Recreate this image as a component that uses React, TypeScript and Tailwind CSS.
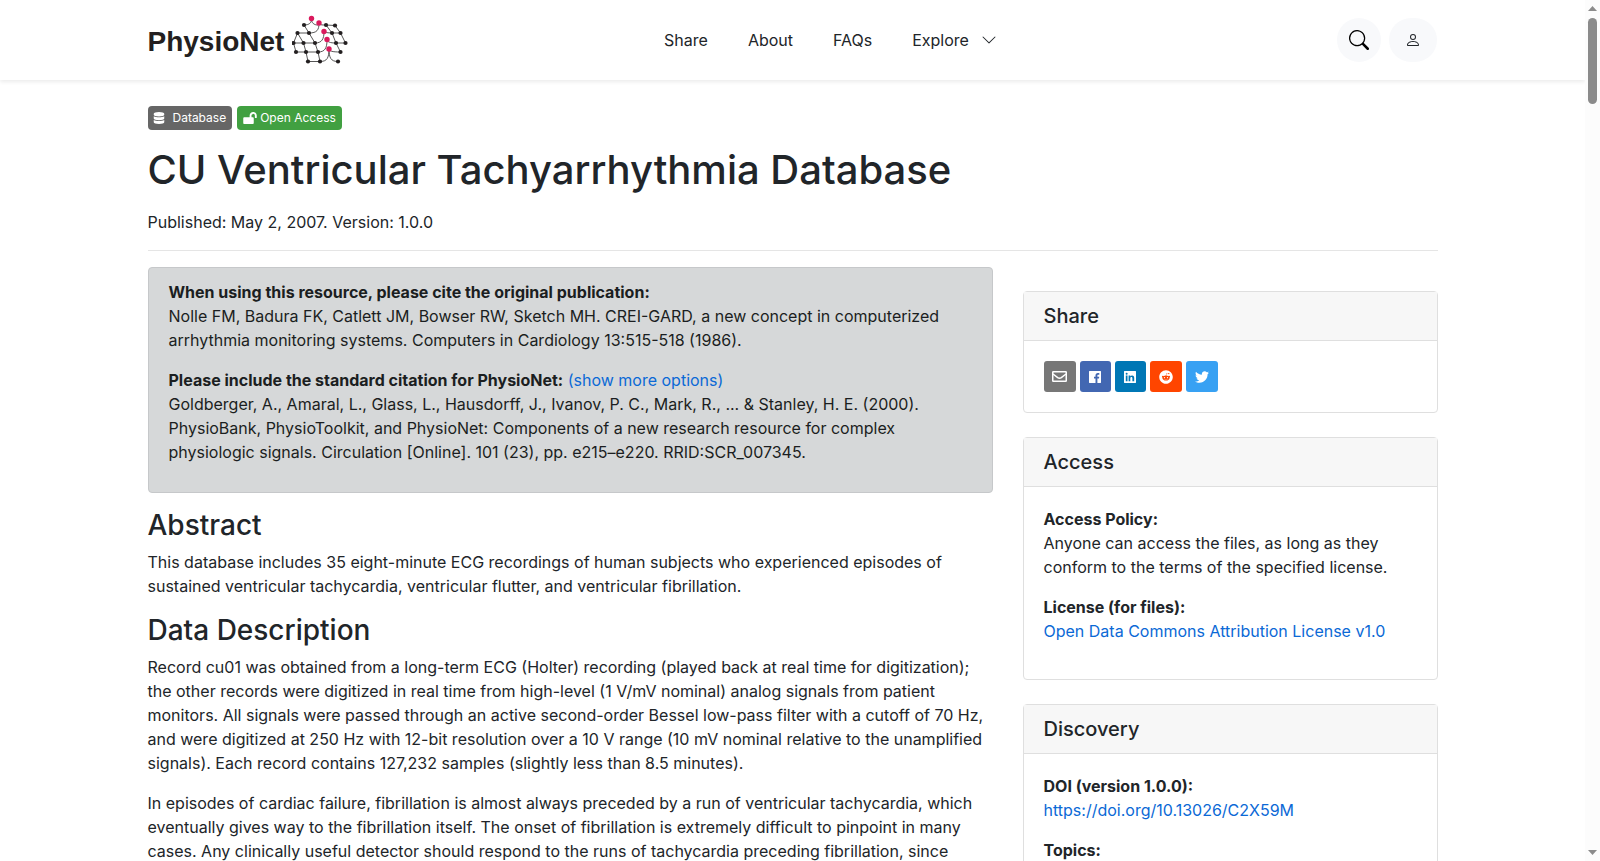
import React from 'react';
import { BsChevronDown, BsPerson, BsSearch } from 'react-icons/bs';
import { FaDatabase, FaLockOpen, FaReddit, FaTwitter } from 'react-icons/fa';

function EnvelopeIcon() {
  return (
    <svg width="15" height="11" viewBox="0 0 15 11" fill="none" stroke="currentColor" strokeWidth="1.5">
      <rect x="0.75" y="0.75" width="13.5" height="9.5" rx="0.5" />
      <path d="M1 3L5.7 6.6C6.8 7.4 8.2 7.4 9.3 6.6L14 3" />
    </svg>
  );
}

function FacebookIcon() {
  return (
    <svg width="12" height="12" viewBox="0 0 12 12" fill="currentColor">
      <path d="M0.4 0H11.6L12 0.4V11.6L11.6 12H8.4V7.5H10L10.2 5.7H8.4V4.6C8.4 4 8.6 3.7 9.3 3.7H10.3V2.1C9.9 2 9.4 2 8.9 2C7.4 2 6.5 2.9 6.5 4.4V5.7H5V7.5H6.5V12H0.4L0 11.6V0.4Z" />
    </svg>
  );
}

function LinkedinIcon() {
  return (
    <svg width="12" height="12" viewBox="0 0 12 12" fill="currentColor">
      <path
        fillRule="evenodd"
        d="M0.4 0H11.6L12 0.4V11.6L11.6 12H0.4L0 11.6V0.4ZM1.8 4.6V10.2H3.5V4.6ZM2.65 1.7A1 1 0 1 0 2.65 3.7A1 1 0 1 0 2.65 1.7ZM4.6 4.6V10.2H6.3V7.3C6.3 6.5 6.6 5.9 7.4 5.9C8.2 5.9 8.4 6.5 8.4 7.3V10.2H10.2V7C10.2 5.4 9.7 4.4 8.1 4.4C7.2 4.4 6.6 4.8 6.3 5.4V4.6Z"
      />
    </svg>
  );
}

const navLinks = ['Share', 'About', 'FAQs'];

const shareLinks = [
  { label: 'Email', icon: <EnvelopeIcon />, className: 'w-8 bg-[#777777]' },
  { label: 'Facebook', icon: <FacebookIcon />, className: 'w-[31px] bg-[#4267b2]' },
  { label: 'LinkedIn', icon: <LinkedinIcon />, className: 'w-[31px] bg-[#0077b5]' },
  { label: 'Reddit', icon: <FaReddit className="h-[14px] w-[14px]" />, className: 'w-8 bg-[#ff4500]' },
  { label: 'Twitter', icon: <FaTwitter className="h-[14px] w-[14px]" />, className: 'w-8 bg-[#38a1f3]' },
];

// Node positions in the 58x50 logo mesh
const darkNodes = [
  [12, 10], [34, 10], [43, 10.5],
  [5.5, 18], [17, 18], [40, 18], [48.5, 18],
  [1.5, 28], [11.5, 28], [23, 28], [44, 28], [53.5, 28],
  [4, 37], [14, 37], [26, 37], [48.5, 37],
  [16, 46.5], [28, 46.5], [46, 46.5],
];
const pinkNodes = [[19.5, 3.5], [27, 8], [32, 16.5], [35, 24.5], [37, 34]];

function Logo() {
  return (
    <a href="#" aria-label="PhysioNet home" className="flex w-50 items-center gap-2 text-[#231f20]">
      <span className="pt-1 font-['Liberation_Sans',Arial,sans-serif] text-[28px] leading-8 font-bold">PhysioNet</span>
      <svg width="58" height="50" viewBox="0 0 58 50" className="shrink-0">
        <g fill="none" stroke="#444" strokeWidth="0.9">
          <path d="M12 10C17 10 19.5 8 19.5 4C19.5 8 22 10 26 10M12 10L17 18L23 28L26 37L28 46.5" />
          <path d="M5.5 18H17C25 18 27 15 27 8M5.5 18L11.5 28L14 37L16 46.5H28" />
          <path d="M5.5 18L1.5 28H23C30 28 32 24 32 16.5M1.5 28L4 37H26C33 37 35 33 35 25" />
          <path d="M28 46.5C35 46.5 37 43 37 34C37 43 39 46.5 46 46.5" />
          <path d="M27 8C27 10 30 10 34 10L43 10.5L48.5 18L53.5 28H44C38 28 35 27 35 24" />
          <path d="M34 10L40 18L44 28L48.5 37C40 37 37 36 37 34M32 16C33 18 36 18 48.5 18" />
        </g>
        {darkNodes.map(([x, y]) => (
          <circle key={`${x}-${y}`} cx={x} cy={y} r="2.1" fill="#231f20" />
        ))}
        {pinkNodes.map(([x, y]) => (
          <circle key={`${x}-${y}`} cx={x} cy={y} r="2.7" fill="#da1a5d" />
        ))}
      </svg>
    </a>
  );
}

function Header() {
  return (
    <header className="h-20 shadow-[0_2px_4px_rgba(0,0,0,0.08)]">
      <div className="mx-auto flex h-full max-w-[1320px] items-center justify-between px-[15px]">
        <Logo />
        <nav className="flex items-center gap-10 pr-6">
          {navLinks.map((label) => (
            <a key={label} href="#">{label}</a>
          ))}
          <button type="button" className="flex items-center gap-3">
            Explore
            <BsChevronDown className="h-4 w-4" />
          </button>
        </nav>
        <div className="flex gap-2">
          <button type="button" aria-label="Search" className="flex h-11 w-11 items-center justify-center rounded-full bg-[#f8f9fb] text-black">
            <BsSearch className="h-5 w-5" />
          </button>
          <button type="button" aria-label="Account" className="flex h-11 w-12 items-center justify-center rounded-full bg-[#f8f9fb]">
            <BsPerson className="h-4 w-4" />
          </button>
        </div>
      </div>
    </header>
  );
}

function Card({ title, children }: { title: string; children: React.ReactNode }) {
  return (
    <section className="rounded border border-[#dfdfdf] bg-white">
      <h2 className="border-b border-[#dfdfdf] bg-[#f7f7f7] px-5 py-3 text-xl leading-6 font-medium">{title}</h2>
      <div className="p-5">{children}</div>
    </section>
  );
}

function SectionTitle({ children }: { children: React.ReactNode }) {
  return <h2 className="mb-2 text-[28px] leading-[33px] font-medium">{children}</h2>;
}

function Scrollbar() {
  return (
    <div aria-hidden="true" className="flex w-[15px] shrink-0 flex-col items-center bg-[#fcfcfc] py-1.5">
      <svg width="9" height="5" viewBox="0 0 9 5"><path d="M0 5L4.5 0L9 5Z" fill="#8b8b8b" /></svg>
      <div className="mt-[7px] h-[86px] w-[9px] rounded-full bg-[#8b8b8b]" />
      <svg width="9" height="5" viewBox="0 0 9 5" className="mt-auto"><path d="M0 0H9L4.5 5Z" fill="#8b8b8b" /></svg>
    </div>
  );
}

export default function App() {
  return (
    <div className="flex h-screen bg-white font-['Inter',sans-serif] text-base leading-6 text-[#212529]">
      <div className="min-w-0 flex-1 overflow-y-auto [scrollbar-width:none]">
        <Header />

        <main className="mx-auto max-w-[1320px] px-[15px] pt-[26px]">
          <div className="flex gap-[5px] text-xs text-white">
            <span className="flex h-6 items-center gap-2 rounded bg-[#666666] pr-1.5 pl-[5px]">
              <FaDatabase className="h-3 w-3" />
              Database
            </span>
            <span className="flex h-6 items-center gap-[3px] rounded bg-[#41a041] px-1.5">
              <FaLockOpen className="h-3 w-[14px]" />
              Open Access
            </span>
          </div>

          <h1 className="mt-4 text-[40px] leading-12 font-medium">CU Ventricular Tachyarrhythmia Database</h1>
          <p className="mt-4">Published: May 2, 2007. Version: 1.0.0</p>
          <hr className="my-4 border-[#e5e5e5]" />

          <div className="grid grid-cols-[minmax(0,845fr)_minmax(0,415fr)] gap-[30px]">
            <article>
              <div className="mb-4 rounded border border-[#c6c8ca] bg-[#d6d8d9] px-5 py-3 text-[#1b1e21]">
                <p className="mb-4">
                  <strong>When using this resource, please cite the original publication:</strong>
                  <br />
                  Nolle FM, Badura FK, Catlett JM, Bowser RW, Sketch MH. CREI-GARD, a new concept in computerized
                  arrhythmia monitoring systems. Computers in Cardiology 13:515-518 (1986).
                </p>
                <p className="mb-4">
                  <strong>Please include the standard citation for PhysioNet:</strong>{' '}
                  <a href="#" className="text-[#0b69d6]">(show more options)</a>
                  <br />
                  Goldberger, A., Amaral, L., Glass, L., Hausdorff, J., Ivanov, P. C., Mark, R., ... &amp; Stanley, H. E.
                  (2000). PhysioBank, PhysioToolkit, and PhysioNet: Components of a new research resource for complex
                  physiologic signals. Circulation [Online]. 101 (23), pp. e215–e220. RRID:SCR_007345.
                </p>
              </div>

              <SectionTitle>Abstract</SectionTitle>
              <p className="mb-4">
                This database includes 35 eight-minute ECG recordings of human subjects who experienced episodes of
                sustained ventricular tachycardia, ventricular flutter, and ventricular fibrillation.
              </p>

              <SectionTitle>Data Description</SectionTitle>
              <p className="mb-4">
                Record cu01 was obtained from a long-term ECG (Holter) recording (played back at real time for
                digitization); the other records were digitized in real time from high-level (1 V/mV nominal) analog
                signals from patient monitors. All signals were passed through an active second-order Bessel low-pass
                filter with a cutoff of 70 Hz, and were digitized at 250 Hz with 12-bit resolution over a 10 V range (10
                mV nominal relative to the unamplified signals). Each record contains 127,232 samples (slightly less
                than 8.5 minutes).
              </p>
              <p className="mb-4">
                In episodes of cardiac failure, fibrillation is almost always preceded by a run of ventricular
                tachycardia, which eventually gives way to the fibrillation itself. The onset of fibrillation is
                extremely difficult to pinpoint in many cases. Any clinically useful detector should respond to the runs
                of tachycardia preceding fibrillation, since
              </p>
            </article>

            <aside className="flex flex-col gap-6 pt-6">
              <Card title="Share">
                <div className="flex gap-1">
                  {shareLinks.map(({ label, icon, className }) => (
                    <a
                      key={label}
                      href="#"
                      aria-label={label}
                      className={`flex h-[31px] items-center justify-center rounded-[3px] text-white ${className}`}
                    >
                      {icon}
                    </a>
                  ))}
                </div>
              </Card>

              <Card title="Access">
                <p className="mb-4">
                  <strong>Access Policy:</strong>
                  <br />
                  Anyone can access the files, as long as they conform to the terms of the specified license.
                </p>
                <p className="mb-4">
                  <strong>License (for files):</strong>
                  <br />
                  <a href="#" className="text-[#0b69d6]">Open Data Commons Attribution License v1.0</a>
                </p>
              </Card>

              <Card title="Discovery">
                <p className="mb-4">
                  <strong>DOI (version 1.0.0):</strong>
                  <br />
                  <a href="#" className="text-[#0b69d6]">https://doi.org/10.13026/C2X59M</a>
                </p>
                <p>
                  <strong>Topics:</strong>
                </p>
              </Card>
            </aside>
          </div>
        </main>
      </div>
      <Scrollbar />
    </div>
  );
}
